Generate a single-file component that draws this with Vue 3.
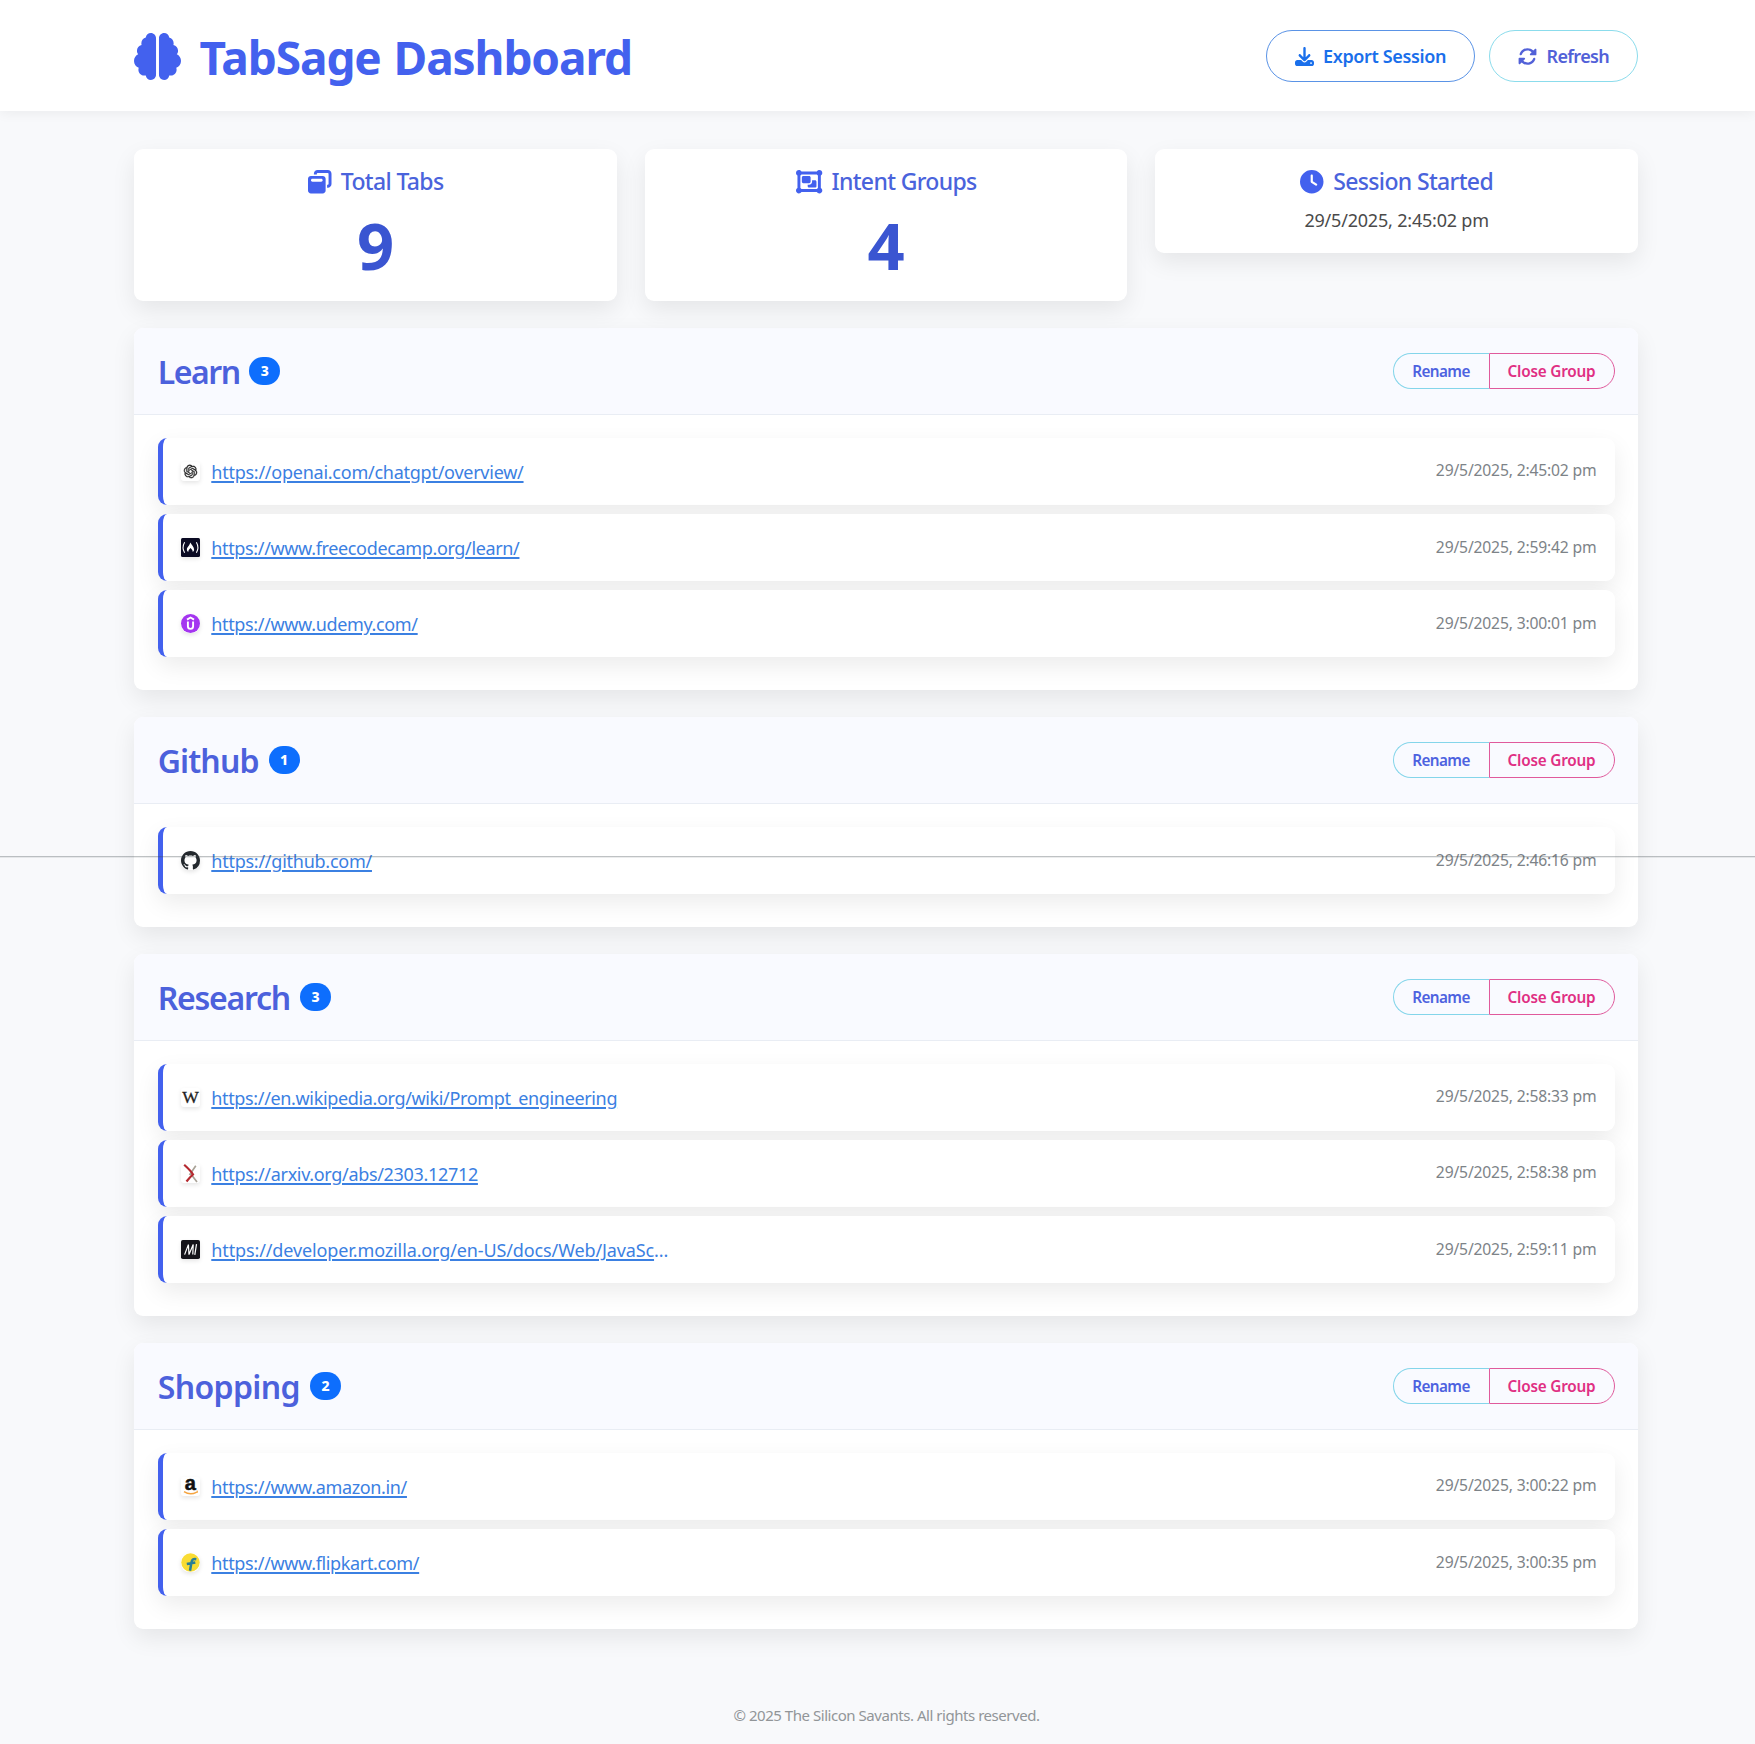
<script setup>
const stats = [
  { icon: 'tabs', label: 'Total Tabs', value: '9', cls: 'tabs' },
  { icon: 'group', label: 'Intent Groups', value: '4', cls: 'intents' },
  { icon: 'clock', label: 'Session Started', date: '29/5/2025, 2:45:02 pm', cls: 'started' },
]

const groups = [
  {
    name: 'Learn',
    tabs: [
      { icon: 'openai', url: 'https://openai.com/chatgpt/overview/', time: '29/5/2025, 2:45:02 pm' },
      { icon: 'fcc', url: 'https://www.freecodecamp.org/learn/', time: '29/5/2025, 2:59:42 pm' },
      { icon: 'udemy', url: 'https://www.udemy.com/', time: '29/5/2025, 3:00:01 pm' },
    ],
  },
  {
    name: 'Github',
    tabs: [{ icon: 'github', url: 'https://github.com/', time: '29/5/2025, 2:46:16 pm' }],
  },
  {
    name: 'Research',
    tabs: [
      { icon: 'wiki', url: 'https://en.wikipedia.org/wiki/Prompt_engineering', time: '29/5/2025, 2:58:33 pm' },
      { icon: 'arxiv', url: 'https://arxiv.org/abs/2303.12712', time: '29/5/2025, 2:58:38 pm' },
      { icon: 'mdn', url: 'https://developer.mozilla.org/en-US/docs/Web/JavaSc', more: true, time: '29/5/2025, 2:59:11 pm' },
    ],
  },
  {
    name: 'Shopping',
    tabs: [
      { icon: 'amazon', url: 'https://www.amazon.in/', time: '29/5/2025, 3:00:22 pm' },
      { icon: 'flipkart', url: 'https://www.flipkart.com/', time: '29/5/2025, 3:00:35 pm' },
    ],
  },
]
</script>

<template>
  <div class="page">
    <header class="topbar">
      <div class="brand">
        <svg class="brain" viewBox="0 0 512 512"><path d="M184 0c30.9 0 56 25.1 56 56V456c0 30.9-25.1 56-56 56c-28.9 0-52.7-21.9-55.7-50.1c-5.2 1.4-10.7 2.1-16.3 2.1c-35.3 0-64-28.7-64-64c0-7.4 1.3-14.6 3.6-21.2C21.4 367.4 0 338.2 0 304c0-31.9 18.7-59.5 45.8-72.3C37.1 220.8 32 207 32 192c0-30.7 21.6-56.3 50.4-62.6C80.8 123.9 80 118 80 112c0-29.9 20.6-55.1 48.3-62.1C131.3 21.9 155.1 0 184 0zM328 0c28.9 0 52.6 21.9 55.7 49.9c27.8 7 48.3 32.1 48.3 62.1c0 6-.8 11.9-2.4 17.4c28.8 6.2 50.4 31.9 50.4 62.6c0 15-5.1 28.8-13.8 39.7C493.3 244.5 512 272.1 512 304c0 34.2-21.4 63.4-51.6 74.8c2.3 6.6 3.6 13.8 3.6 21.2c0 35.3-28.7 64-64 64c-5.6 0-11.1-.7-16.3-2.1c-3 28.2-26.8 50.1-55.7 50.1c-30.9 0-56-25.1-56-56V56c0-30.9 25.1-56 56-56z" /></svg>
        <h1>TabSage Dashboard</h1>
      </div>
      <div class="actions">
        <button class="pill export">
          <svg viewBox="0 0 512 512"><path d="M288 32c0-17.7-14.3-32-32-32s-32 14.3-32 32V274.7l-73.4-73.4c-12.5-12.5-32.8-12.5-45.3 0s-12.5 32.8 0 45.3l128 128c12.5 12.5 32.8 12.5 45.3 0l128-128c12.5-12.5 12.5-32.8 0-45.3s-32.8-12.5-45.3 0L288 274.7V32zM64 352c-35.3 0-64 28.7-64 64v32c0 35.3 28.7 64 64 64H448c35.3 0 64-28.7 64-64V416c0-35.3-28.7-64-64-64H346.5l-45.3 45.3c-25 25-65.5 25-90.5 0L165.5 352H64zm368 56a24 24 0 1 1 0 48 24 24 0 1 1 0-48z" /></svg>
          <span>Export Session</span>
        </button>
        <button class="pill refresh">
          <svg viewBox="0 0 512 512"><path d="M142.9 142.9c62.2-62.2 162.7-62.5 225.3-1L327 183c-6.9 6.9-8.9 17.2-5.2 26.2s12.5 14.8 22.2 14.8H472c13.3 0 24-10.7 24-24V72c0-9.7-5.8-18.5-14.8-22.2s-19.3-1.7-26.2 5.2L413.4 96.6c-87.6-86.5-228.7-86.2-315.8 1C73.2 122 55.6 150.7 44.8 181.4c-5.9 16.7 2.9 34.9 19.5 40.8s34.9-2.9 40.8-19.5c7.7-21.8 20.2-42.3 37.8-59.8zM16 312V440c0 9.7 5.8 18.5 14.8 22.2s19.3 1.7 26.2-5.2l41.6-41.6c87.6 86.5 228.7 86.2 315.8-1c24.4-24.4 42.1-53.1 52.9-83.7c5.9-16.7-2.9-34.9-19.5-40.8s-34.9 2.9-40.8 19.5c-7.7 21.8-20.2 42.3-37.8 59.8c-62.2 62.2-162.7 62.5-225.3 1L185 329c6.9-6.9 8.9-17.2 5.2-26.2s-12.5-14.8-22.2-14.8H40c-13.3 0-24 10.7-24 24z" /></svg>
          <span>Refresh</span>
        </button>
      </div>
    </header>

    <main>
      <section class="stats">
        <article v-for="s in stats" :key="s.label" class="stat" :class="s.cls">
          <h2>
            <svg v-if="s.icon === 'tabs'" viewBox="0 0 512 512"><path d="M432 64H208c-8.8 0-16 7.2-16 16V96H128V80c0-44.2 35.8-80 80-80H432c44.2 0 80 35.8 80 80V304c0 44.2-35.8 80-80 80H416V320h16c8.8 0 16-7.2 16-16V80c0-8.8-7.2-16-16-16zM0 192c0-35.3 28.7-64 64-64H320c35.3 0 64 28.7 64 64V448c0 35.3-28.7 64-64 64H64c-35.3 0-64-28.7-64-64V192zm64 32c0 17.7 14.3 32 32 32H288c17.7 0 32-14.3 32-32s-14.3-32-32-32H96c-17.7 0-32 14.3-32 32z" /></svg>
            <svg v-else-if="s.icon === 'group'" class="wide" viewBox="0 0 576 512"><path d="M32 119.4C12.9 108.4 0 87.7 0 64C0 28.7 28.7 0 64 0c23.7 0 44.4 12.9 55.4 32H456.6C467.6 12.9 488.3 0 512 0c35.3 0 64 28.7 64 64c0 23.7-12.9 44.4-32 55.4V392.6c19.1 11.1 32 31.7 32 55.4c0 35.3-28.7 64-64 64c-23.7 0-44.4-12.9-55.4-32H119.4c-11.1 19.1-31.7 32-55.4 32c-35.3 0-64-28.7-64-64c0-23.7 12.9-44.4 32-55.4V119.4zM456.6 96H119.4c-5.6 9.7-13.7 17.8-23.4 23.4V392.6c9.7 5.6 17.8 13.7 23.4 23.4H456.6c5.6-9.7 13.7-17.8 23.4-23.4V119.4c-9.7-5.6-17.8-13.7-23.4-23.4zM128 160c0-17.7 14.3-32 32-32H288c17.7 0 32 14.3 32 32v96c0 17.7-14.3 32-32 32H160c-17.7 0-32-14.3-32-32V160zM256 320h32c35.3 0 64-28.7 64-64V224h64c17.7 0 32 14.3 32 32v96c0 17.7-14.3 32-32 32H288c-17.7 0-32-14.3-32-32V320z" /></svg>
            <svg v-else viewBox="0 0 512 512"><path d="M256 0a256 256 0 1 1 0 512A256 256 0 1 1 256 0zM232 120V256c0 8 4 15.5 10.7 20l96 64c11 7.4 25.9 4.4 33.3-6.7s4.4-25.9-6.7-33.3L280 243.2V120c0-13.3-10.7-24-24-24s-24 10.7-24 24z" /></svg>
            <span>{{ s.label }}</span>
          </h2>
          <p v-if="s.value" class="value">{{ s.value }}</p>
          <p v-else class="date">{{ s.date }}</p>
        </article>
      </section>

      <section v-for="g in groups" :key="g.name" class="group">
        <div class="group-head">
          <h3 :class="g.name.toLowerCase()">{{ g.name }}</h3>
          <span class="badge">{{ g.tabs.length }}</span>
          <div class="btns">
            <button class="rename"><span>Rename</span></button>
            <button class="close"><span>Close Group</span></button>
          </div>
        </div>
        <ul>
          <li v-for="t in g.tabs" :key="t.url">
            <span class="fav" :class="{ round: t.icon === 'udemy' || t.icon === 'github' || t.icon === 'flipkart' }">
              <svg v-if="t.icon === 'openai'" viewBox="-5 -5 34 34"><path fill="#222" stroke="#222" stroke-width=".5" d="M22.2819 9.8211a5.9847 5.9847 0 0 0-.5157-4.9108 6.0462 6.0462 0 0 0-6.5098-2.9A6.0651 6.0651 0 0 0 4.9807 4.1818a5.9847 5.9847 0 0 0-3.9977 2.9 6.0462 6.0462 0 0 0 .7427 7.0966 5.98 5.98 0 0 0 .511 4.9107 6.051 6.051 0 0 0 6.5146 2.9001A5.9847 5.9847 0 0 0 13.2599 24a6.0557 6.0557 0 0 0 5.7718-4.2058 5.9894 5.9894 0 0 0 3.9977-2.9001 6.0557 6.0557 0 0 0-.7475-7.0729zm-9.022 12.6081a4.4755 4.4755 0 0 1-2.8764-1.0408l.1419-.0804 4.7783-2.7582a.7948.7948 0 0 0 .3927-.6813v-6.7369l2.02 1.1686a.071.071 0 0 1 .038.052v5.5826a4.504 4.504 0 0 1-4.4945 4.4944zm-9.6607-4.1254a4.4708 4.4708 0 0 1-.5346-3.0137l.142.0852 4.783 2.7582a.7712.7712 0 0 0 .7806 0l5.8428-3.3685v2.3324a.0804.0804 0 0 1-.0332.0615L9.74 19.9502a4.4992 4.4992 0 0 1-6.1408-1.6464zM2.3408 7.8956a4.485 4.485 0 0 1 2.3655-1.9728V11.6a.7664.7664 0 0 0 .3879.6765l5.8144 3.3543-2.0201 1.1685a.0757.0757 0 0 1-.071 0l-4.8303-2.7865A4.504 4.504 0 0 1 2.3408 7.872zm16.5963 3.8558L13.1038 8.364 15.1192 7.2a.0757.0757 0 0 1 .071 0l4.8303 2.7913a4.4944 4.4944 0 0 1-.6765 8.1042v-5.6772a.79.79 0 0 0-.407-.667zm2.0107-3.0231l-.142-.0852-4.7735-2.7818a.7759.7759 0 0 0-.7854 0L9.409 9.2297V6.8974a.0662.0662 0 0 1 .0284-.0615l4.8303-2.7866a4.4992 4.4992 0 0 1 6.6802 4.66zM8.3065 12.863l-2.02-1.1638a.0804.0804 0 0 1-.038-.0567V6.0742a4.4992 4.4992 0 0 1 7.3757-3.4537l-.142.0805L8.704 5.459a.7948.7948 0 0 0-.3927.6813zm1.0976-2.3654l2.602-1.4998 2.6069 1.4998v2.9994l-2.5974 1.4997-2.6067-1.4997Z" /></svg>
              <svg v-else-if="t.icon === 'fcc'" viewBox="0 0 19 19"><rect width="19" height="19" rx="1.5" fill="#0a0a23" /><path d="M3.6 4.2Q.6 9.5 3.6 14.8M15.4 4.2Q18.4 9.5 15.4 14.8" fill="none" stroke="#fff" stroke-width="1.1" /><path d="M9.2 4.6c1.5 2.3 3.9 4.5 3.9 7 0 1.1-.6 2-1.4 2.4 .3-1.6-.9-2.8-2.2-4.1-1.3 1.3-2.4 2.6-2.2 4.1-.9-.5-1.5-1.4-1.4-2.5 0-2.3 2.9-3.9 3.3-6.9z" fill="#fff" /></svg>
              <svg v-else-if="t.icon === 'udemy'" viewBox="0 0 19 19"><circle cx="9.5" cy="9.5" r="9.5" fill="#a435f0" /><path d="M6 5.6 9.5 3.5 13 5.6M6.9 7.600v4.700a2.600 2.600 0 0 0 5.200 0V7.600" fill="none" stroke="#fff" stroke-width="1.9" /></svg>
              <svg v-else-if="t.icon === 'github'" viewBox="0 0 16 16"><path fill="#24292e" d="M8 0C3.58 0 0 3.58 0 8c0 3.54 2.29 6.53 5.47 7.59.4.07.55-.17.55-.38 0-.19-.01-.82-.01-1.49-2.01.37-2.53-.49-2.69-.94-.09-.23-.48-.94-.82-1.13-.28-.15-.68-.52-.01-.53.63-.01 1.08.58 1.23.82.72 1.21 1.87.87 2.33.66.07-.52.28-.87.51-1.07-1.78-.2-3.64-.89-3.64-3.95 0-.87.31-1.59.82-2.15-.08-.2-.36-1.02.08-2.12 0 0 .67-.21 2.2.82.64-.18 1.32-.27 2-.27s1.36.09 2 .27c1.53-1.04 2.2-.82 2.2-.82.44 1.1.16 1.92.08 2.12.51.56.82 1.27.82 2.15 0 3.07-1.87 3.75-3.65 3.95.29.25.54.73.54 1.48 0 1.07-.01 1.93-.01 2.2 0 .21.15.46.55.38A8.01 8.01 0 0 0 16 8c0-4.42-3.58-8-8-8z" /></svg>
              <svg v-else-if="t.icon === 'wiki'" viewBox="0 0 19 19"><text x="9.5" y="14.6" text-anchor="middle" font-family="Liberation Serif, serif" font-size="17.5" fill="#222" stroke="#222" stroke-width=".3">W</text></svg>
              <svg v-else-if="t.icon === 'arxiv'" viewBox="0 0 19 19"><path d="M14.8 1.8 8.500 11M9.5 9.5l6.500 8.500" stroke="#a9a297" stroke-width="1.7" fill="none" /><path d="M3.2 .8Q10.500 7.500 12 10.500 9 13 5.500 17.500" stroke="#b5292f" stroke-width="2.2" fill="none" /></svg>
              <svg v-else-if="t.icon === 'mdn'" viewBox="0 0 19 19"><rect width="19" height="19" rx="1.8" fill="#15141a" /><path d="M3.6 14.6 7.4 4.6 8 14.6 12.2 4.6 11.8 14.600M15.500 4.200l-1.700 10.600" fill="none" stroke="#fff" stroke-width="1.2" /></svg>
              <svg v-else-if="t.icon === 'amazon'" viewBox="0 0 19 19"><text x="9.3" y="12.9" text-anchor="middle" font-family="Liberation Sans, sans-serif" font-weight="700" font-size="20" fill="#111" stroke="#111" stroke-width=".5">a</text><path d="M3 14.600q6 4 12.300.8M16.300 13.700l-.4 2.300" fill="none" stroke="#f5a440" stroke-width="1.4" /></svg>
              <svg v-else viewBox="0 0 19 19"><circle cx="9.5" cy="9.5" r="9.2" fill="#f9dc34" /><path d="M15.300 6.200c-3.200-.6-4.400.5-4.800 3L9 17.800M5.800 11l8.500-1.600" fill="none" stroke="#2a7f96" stroke-width="2.5" /></svg>
            </span>
            <span class="link" :class="t.icon"><a>{{ t.url }}</a><template v-if="t.more">...</template></span>
            <time>{{ t.time }}</time>
          </li>
        </ul>
      </section>
    </main>

    <footer>© 2025 The Silicon Savants. All rights reserved.</footer>
    <div class="seam"></div>
  </div>
</template>

<style>
body { margin: 0; background: #f8f9fb; }
</style>

<style scoped>
* { box-sizing: border-box; }
.page {
  position: relative;
  height: 1744px;
  overflow: hidden;
  background: #f8f9fb;
  color: #4a4a4a;
  font-family: 'Noto Sans', 'Open Sans', sans-serif;
}
h1, h2, h3, p, ul { margin: 0; padding: 0; }
svg { display: block; fill: currentColor; overflow: visible; }
button { font-family: inherit; background: transparent; padding: 0; white-space: nowrap; }
.topbar {
  display: flex;
  justify-content: space-between;
  height: 111px;
  padding: 30px 117px 0 134px;
  background: #fff;
  box-shadow: 0 2px 12px rgba(0, 0, 0, 0.06);
}
.brand { display: flex; color: #4361ee; }
.brain { width: 47px; height: 47px; margin-top: 3px; }
h1 { margin: -6px 0 0 18.5px; font-size: 46px; line-height: 66px; font-weight: 700; letter-spacing: -1.1px; word-spacing: 2px; white-space: nowrap; }
.actions { display: flex; gap: 14px; }
.pill {
  display: flex;
  align-items: center;
  height: 52px;
  border: 1.5px solid;
  border-radius: 26px;
  font-size: 18px;
  font-weight: 600;
}
.pill svg { width: 19px; height: 19px; margin-right: 9.5px; }
.export { width: 209px; padding-left: 27.5px; border-color: #5a93e6; color: #1a6feb; letter-spacing: -0.36px; }
.refresh { width: 149px; padding-left: 28px; border-color: #8bdcec; color: #5261d8; letter-spacing: -0.65px; }
main { width: 1503.5px; margin: 37.5px 0 0 134.4px; }
.stats { display: flex; align-items: flex-start; justify-content: space-between; height: 179.5px; }
.stat {
  width: 482.5px;
  height: 152.5px;
  border-radius: 9px;
  background: #fff;
  box-shadow: 0 9px 23px rgba(0, 0, 0, 0.08);
  text-align: center;
}
.stat.started { height: 104px; }
.stat h2 {
  display: flex;
  align-items: center;
  justify-content: center;
  gap: 9.5px;
  height: 33px;
  margin-top: 17px;
  color: #4a63dc;
  font-size: 23px;
  font-weight: 540;
  letter-spacing: -0.65px;
}
.stat h2 span { padding-bottom: 2px; }
.stat svg { width: 23.5px; height: 23.5px; color: #4361ee; }
.stat svg.wide { width: 26.3px; }
.value { color: #3a55d1; font-size: 65px; line-height: 76px; font-weight: 700; margin-top: 8px; }
.date { font-size: 18px; line-height: 26px; margin-top: 8px; letter-spacing: -0.2px; }
.group {
  margin-bottom: 27.4px;
  padding-bottom: 23.4px;
  border-radius: 9px;
  background: #fff;
  box-shadow: 0 9px 23px rgba(0, 0, 0, 0.08);
}
.group-head {
  display: flex;
  align-items: center;
  height: 86.6px;
  padding: 0 23.4px;
  border-bottom: 1px solid #e9edf4;
  border-radius: 9px 9px 0 0;
  background: #f9faff;
}
h3 { padding-top: 3px; color: #4c61dc; font-size: 32px; line-height: 44px; font-weight: 560; letter-spacing: -0.4px; white-space: nowrap; }
h3.learn { letter-spacing: -1.45px; margin-right: -0.5px; }
h3.github { letter-spacing: -0.9px; }
h3.research { letter-spacing: -1.25px; }
h3.shopping { letter-spacing: -0.65px; }
.badge {
  width: 31px;
  height: 28px;
  margin-left: 10px;
  border-radius: 14px;
  background: #0d6efd;
  color: #fff;
  font-size: 14px;
  line-height: 28px;
  font-weight: 800;
  text-align: center;
}
.btns { display: flex; margin-left: auto; padding-top: 1px; }
.btns button { height: 36px; font-size: 15.3px; font-weight: 600; }
.rename { width: 96px; border: 1.5px solid #84d5ea; border-right: 0; border-radius: 18px 0 0 18px; color: #4d62e0; letter-spacing: -0.6px; }
.close { width: 126px; border: 1.5px solid #e05a9c; border-radius: 0 18px 18px 0; color: #e02f83; letter-spacing: -0.2px; }
ul { list-style: none; padding: 23.4px 23.4px 0; }
li {
  display: flex;
  align-items: center;
  height: 67px;
  margin-bottom: 9.1px;
  padding: 0 18px 0 18.5px;
  border-left: 5px solid #4361ee;
  border-radius: 9px;
  background: #fff;
  box-shadow: 0 9px 23px rgba(0, 0, 0, 0.08);
}
.fav { width: 19px; height: 19px; margin-right: 11px; border-radius: 3px; box-shadow: 0 2px 4px rgba(0, 0, 0, 0.1); }
.fav.round { border-radius: 8px; }
.fav svg { width: 19px; height: 19px; }
.link { padding-top: 1px; font-size: 18px; line-height: 26px; color: #3b80e2; letter-spacing: -0.35px; white-space: nowrap; }
.link.openai, .link.github { letter-spacing: -0.25px; }
.link.arxiv { letter-spacing: -0.32px; }
.link.mdn { letter-spacing: -0.12px; }
.link a { text-decoration: underline; text-decoration-thickness: 1.5px; text-underline-offset: 2px; }
time { margin-left: auto; padding-bottom: 2px; color: #7d8388; font-size: 15.7px; letter-spacing: -0.18px; white-space: nowrap; }
footer { margin-top: 75px; padding-left: 18px; text-align: center; font-size: 15px; line-height: 22px; color: #919598; letter-spacing: -0.46px; }
.seam { position: absolute; left: 0; right: 0; top: 856px; height: 2px; background: linear-gradient(rgba(60, 70, 75, 0.33) 50%, rgba(60, 70, 75, 0.1) 50%); }
</style>
